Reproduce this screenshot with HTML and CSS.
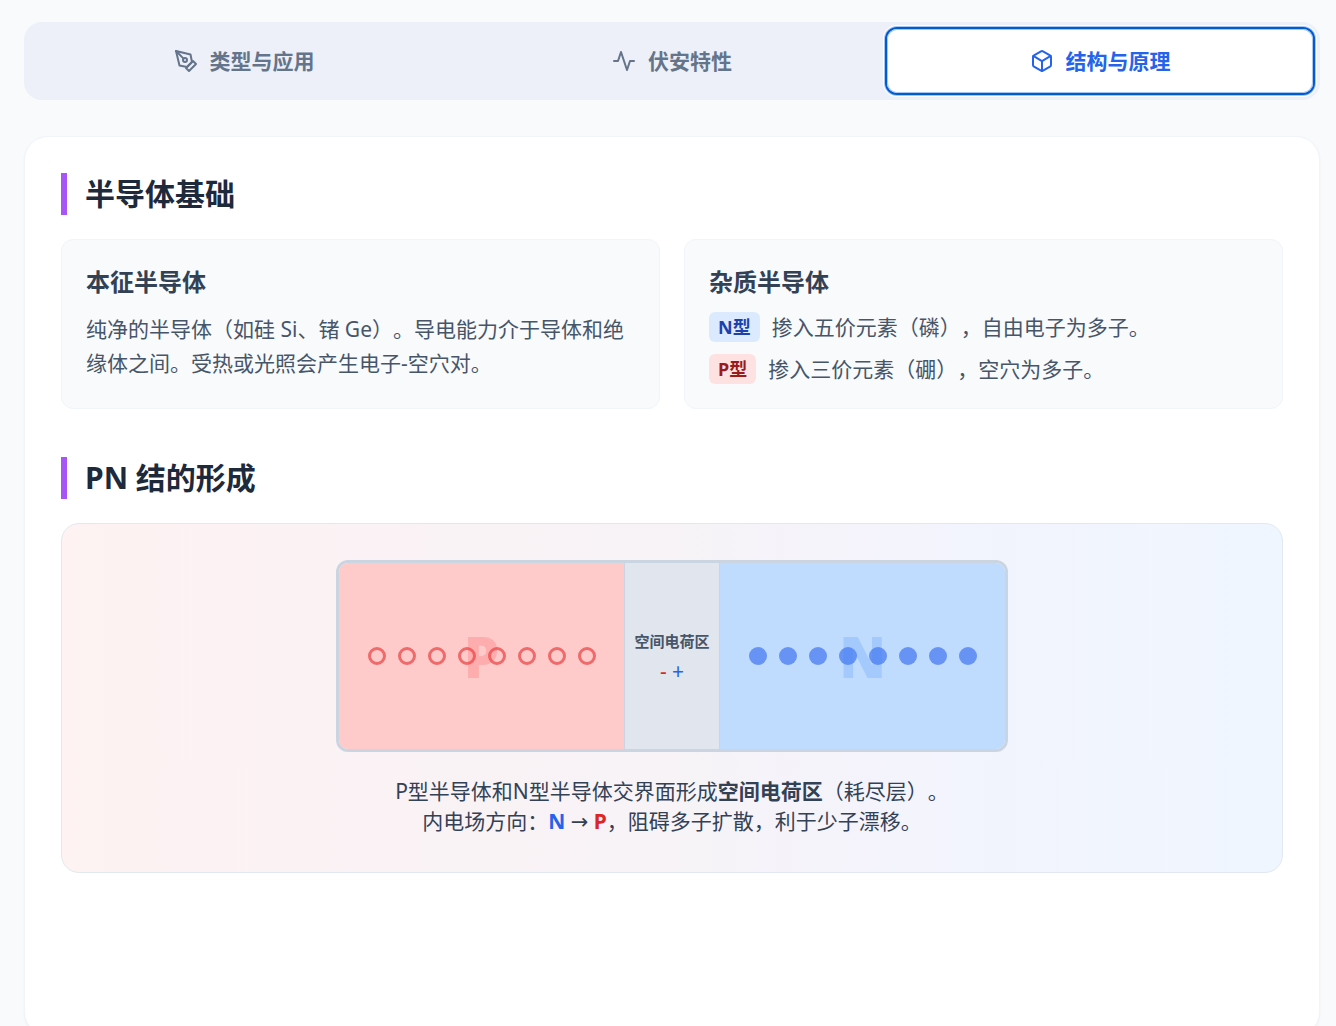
FILE: index.html
```html
<!DOCTYPE html>
<html lang="zh-CN">
<head>
    <meta charset="UTF-8">
    <meta name="viewport" content="width=device-width, initial-scale=1.0">
    <title>二极管 - 结构与原理</title>
    <link rel="stylesheet" href="styles.css">
</head>
<body>
    <nav class="tabs" role="tablist">
        <button type="button" class="tab" role="tab">
            <svg class="icon" viewBox="0 0 24 24" aria-hidden="true">
                <path d="M12 19l7-7 3 3-7 7-3-3z"/>
                <path d="M18 13l-1.5-7.5L2 2l3.5 14.5L13 18l5-5z"/>
                <path d="M2 2l7.586 7.586"/>
                <circle cx="11" cy="11" r="2"/>
            </svg>
            <span>类型与应用</span>
        </button>
        <button type="button" class="tab" role="tab">
            <svg class="icon" viewBox="0 0 24 24" aria-hidden="true">
                <path d="M22 12h-4l-3 9L9 3l-3 9H2"/>
            </svg>
            <span>伏安特性</span>
        </button>
        <button type="button" class="tab active" role="tab" aria-selected="true">
            <svg class="icon" viewBox="0 0 24 24" aria-hidden="true">
                <path d="M21 16V8a2 2 0 0 0-1-1.73l-7-4a2 2 0 0 0-2 0l-7 4A2 2 0 0 0 3 8v8a2 2 0 0 0 1 1.73l7 4a2 2 0 0 0 2 0l7-4A2 2 0 0 0 21 16z"/>
                <path d="M3.27 6.96L12 12.01l8.73-5.05"/>
                <path d="M12 22.08V12"/>
            </svg>
            <span>结构与原理</span>
        </button>
    </nav>

    <main class="panel">
        <section class="section">
            <h2>半导体基础</h2>
            <div class="cards">
                <div class="card">
                    <h3>本征半导体</h3>
                    <p>纯净的半导体（如硅 Si、锗 Ge）。导电能力介于导体和绝缘体之间。受热或光照会产生电子-空穴对。</p>
                </div>
                <div class="card">
                    <h3>杂质半导体</h3>
                    <ul class="types">
                        <li><span class="badge badge-n">N型</span>掺入五价元素（磷），自由电子为多子。</li>
                        <li><span class="badge badge-p">P型</span>掺入三价元素（硼），空穴为多子。</li>
                    </ul>
                </div>
            </div>
        </section>

        <section class="section">
            <h2>PN 结的形成</h2>
            <div class="junction-box">
                <div class="junction">
                    <div class="region region-p">
                        <div class="carriers">
                            <i></i><i></i><i></i><i></i><i></i><i></i><i></i><i></i>
                        </div>
                        <span class="letter">P</span>
                    </div>
                    <div class="depletion">
                        <strong>空间电荷区</strong>
                        <div class="charges"><span class="red">-</span> <span class="blue">+</span></div>
                    </div>
                    <div class="region region-n">
                        <div class="carriers">
                            <i></i><i></i><i></i><i></i><i></i><i></i><i></i><i></i>
                        </div>
                        <span class="letter">N</span>
                    </div>
                </div>
                <p class="caption">
                    P型半导体和N型半导体交界面形成<strong>空间电荷区</strong>（耗尽层）。<br>
                    内电场方向：<strong class="blue">N</strong> <span class="arrow">→</span> <strong class="red">P</strong>，阻碍多子扩散，利于少子漂移。
                </p>
            </div>
        </section>
    </main>
</body>
</html>
```
FILE: styles.css
```css
* {
    box-sizing: border-box;
    margin: 0;
    padding: 0;
}

body {
    padding: 22px 16px 24px 24px;
    background-color: #f8fafc;
    color: #334155;
    font-family: "Noto Sans", "Noto Sans CJK SC", sans-serif;
    font-size: 21px;
    line-height: 30px;
    text-spacing-trim: space-all;
}

.tabs {
    display: flex;
    gap: 2px;
    padding: 7px;
    margin-bottom: 36px;
    background-color: #edf0f8;
    border-radius: 18px;
}

.tab {
    flex: 1;
    display: flex;
    align-items: center;
    justify-content: center;
    gap: 12px;
    height: 64px;
    border: none;
    border-radius: 10px;
    background: none;
    color: #64748b;
    font: inherit;
    font-weight: 700;
    cursor: pointer;
}

.tab.active {
    background-color: #fff;
    color: #2563eb;
    box-shadow: inset 0 0 0 1px #a6c6f0, 0 0 0 2px #005bd0, 0 0 0 3px #a6c6f0, 0 0 0 4px #fff;
}

.icon {
    width: 24px;
    height: 24px;
    fill: none;
    stroke: currentColor;
    stroke-width: 2;
    stroke-linecap: round;
    stroke-linejoin: round;
}

.panel {
    min-height: 900px;
    padding: 36px;
    background-color: #fff;
    border: 1px solid #f1f5f9;
    border-radius: 24px;
    box-shadow: 0 1px 3px rgba(0, 0, 0, 0.04);
}

.section {
    margin-bottom: 48px;
}

h2 {
    margin-bottom: 24px;
    padding-left: 18px;
    border-left: 6px solid #a855f7;
    color: #1e293b;
    font-size: 30px;
    line-height: 42px;
}

.cards {
    display: grid;
    grid-template-columns: 1fr 1fr;
    gap: 24px;
}

.card {
    padding: 24px;
    background-color: #f8fafc;
    border: 1px solid #f1f5f9;
    border-radius: 12px;
    color: #475569;
}

.card h3 {
    margin-bottom: 12px;
    color: #334155;
    font-size: 24px;
    line-height: 36px;
}

.card p {
    line-height: 34px;
}

.types {
    display: flex;
    flex-direction: column;
    gap: 12px;
    list-style: none;
}

.types li {
    display: flex;
    align-items: center;
    gap: 12px;
}

.badge {
    padding: 0 9px;
    border-radius: 6px;
    font-size: 18px;
    font-weight: 700;
}

.badge-n {
    background-color: #dbeafe;
    color: #1e40af;
}

.badge-p {
    background-color: #fee2e2;
    color: #991b1b;
}

.junction-box {
    padding: 36px;
    border: 1px solid #e2e8f0;
    border-radius: 18px;
    background: linear-gradient(to right, #fef2f2, #f7f3f7 50%, #f3f4fd 72%, #eff6ff);
}

.junction {
    display: flex;
    max-width: 672px;
    height: 192px;
    margin: 0 auto 24px;
    border: 3px solid #cbd5e1;
    border-radius: 12px;
    overflow: hidden;
}

.region {
    flex: 1;
    position: relative;
    display: flex;
    align-items: center;
    justify-content: center;
}

.region-p {
    background-color: #fecaca;
}

.region-n {
    background-color: #bfdbfe;
}

.carriers {
    display: flex;
    gap: 12px;
}

.carriers i {
    width: 18px;
    height: 18px;
    border-radius: 50%;
}

.region-p i {
    border: 3px solid #ef6b6b;
}

.region-n i {
    background-color: #6693f4;
}

/* big watermark letter over the carriers */
.letter {
    position: absolute;
    inset: 0;
    display: flex;
    align-items: center;
    justify-content: center;
    font-size: 56px;
    font-weight: 900;
}

.region-p .letter {
    color: rgba(248, 60, 60, 0.2);
}

.region-n .letter {
    color: rgba(59, 130, 246, 0.2);
}

.depletion {
    width: 96px;
    display: flex;
    flex-direction: column;
    align-items: center;
    justify-content: center;
    background-color: #e1e5ed;
    border-left: 1px solid #cbd5e1;
    border-right: 1px solid #cbd5e1;
}

.depletion strong {
    color: #475569;
    font-size: 15px;
    white-space: nowrap;
}

.caption {
    text-align: center;
}

.arrow {
    font-family: "DejaVu Sans", sans-serif;
    line-height: 1;
}

.blue {
    color: #2563eb;
}

.red {
    color: #dc2626;
}
```
